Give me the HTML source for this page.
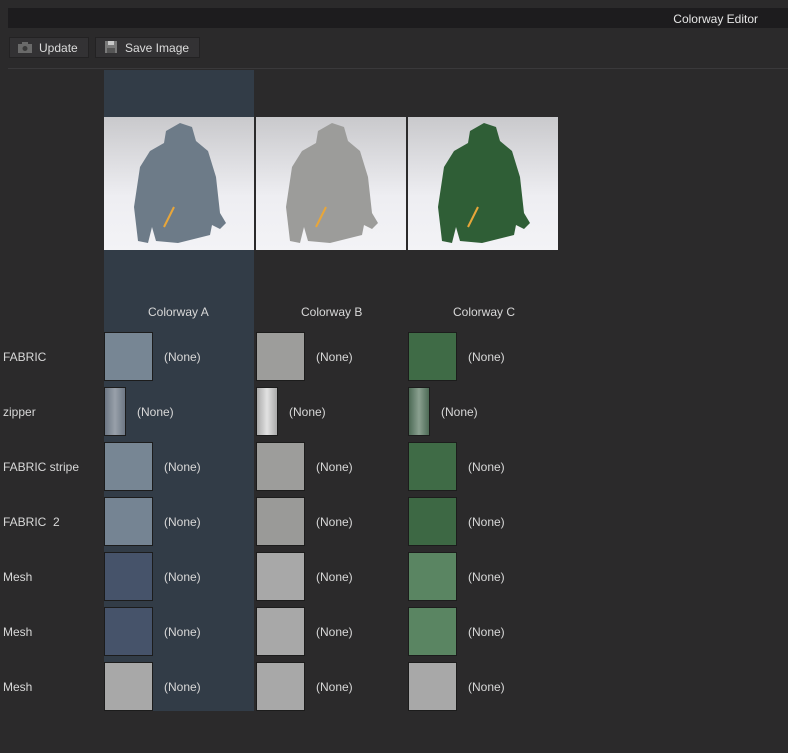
<!DOCTYPE html>
<html><head><meta charset="utf-8"><style>
body{margin:0;width:788px;height:753px;background:#2b2a2b;position:relative;overflow:hidden;font-family:"Liberation Sans","DejaVu Sans",sans-serif;font-size:12px;color:#d8d8d8}
.a{position:absolute}
.btn{position:absolute;top:37px;height:21px;background:#333234;border:1px solid #232223;color:#dcdcdc;font-size:12px;line-height:21px;box-sizing:border-box}
.sw{position:absolute;width:49px;height:49px;box-sizing:border-box;border:1px solid #1c1c1c}
.zp{width:22px}
.t{position:absolute;line-height:14px;margin-top:1px}
.img{position:absolute;top:117px;width:150px;height:133px;background:linear-gradient(#c9c9cc,#eeeef2 60%,#f3f3f6)}
</style></head><body>
<div class="a" style="left:8px;top:8px;width:780px;height:20px;background:#1d1c1e"></div>
<div class="t" style="right:30px;top:11px;color:#e6e6e6">Colorway Editor</div>
<div class="btn" style="left:9px;width:80px;padding-left:29px">Update</div>
<svg class="a" style="left:18px;top:42px" width="14" height="11"><rect x="0" y="2" width="14" height="9" fill="#6a6a6a"/><rect x="4" y="0" width="6" height="3" fill="#6a6a6a"/><circle cx="7" cy="6.5" r="2.5" fill="#3a3a3a"/></svg>
<div class="btn" style="left:95px;width:105px;padding-left:29px">Save Image</div>
<svg class="a" style="left:105px;top:41px" width="12" height="12"><rect width="12" height="12" fill="#7a7a7a"/><rect x="3" y="0" width="6" height="4" fill="#c8c8c8"/><rect x="2" y="7" width="8" height="5" fill="#555"/></svg>
<div class="a" style="left:8px;top:68px;width:780px;height:1px;background:#3a393b"></div>
<div class="a" style="left:104px;top:70px;width:150px;height:641px;background:#323c47"></div>

<div class="img" style="left:104px"><svg width="150" height="133" viewBox="0 0 150 133"><path d="M62 14 L76 6 L88 10 L92 24 L104 34 L112 60 L116 96 L122 106 L116 112 L108 108 L106 118 L74 126 L52 124 L48 110 L44 126 L34 124 L30 90 L36 50 L46 34 L60 26 Z" fill="#6d7b88"/><path d="M70 90 L60 110" stroke="#e8a63a" stroke-width="2"/></svg></div>
<div class="img" style="left:256px"><svg width="150" height="133" viewBox="0 0 150 133"><path d="M62 14 L76 6 L88 10 L92 24 L104 34 L112 60 L116 96 L122 106 L116 112 L108 108 L106 118 L74 126 L52 124 L48 110 L44 126 L34 124 L30 90 L36 50 L46 34 L60 26 Z" fill="#9c9c9a"/><path d="M70 90 L60 110" stroke="#e8a63a" stroke-width="2"/></svg></div>
<div class="img" style="left:408px"><svg width="150" height="133" viewBox="0 0 150 133"><path d="M62 14 L76 6 L88 10 L92 24 L104 34 L112 60 L116 96 L122 106 L116 112 L108 108 L106 118 L74 126 L52 124 L48 110 L44 126 L34 124 L30 90 L36 50 L46 34 L60 26 Z" fill="#2f5e36"/><path d="M70 90 L60 110" stroke="#e8a63a" stroke-width="2"/></svg></div>

<div class="t" style="left:148px;top:304px">Colorway A</div>
<div class="t" style="left:301px;top:304px">Colorway B</div>
<div class="t" style="left:453px;top:304px">Colorway C</div>

<div class="t" style="left:3px;top:349px">FABRIC</div>
<div class="t" style="left:3px;top:404px">zipper</div>
<div class="t" style="left:3px;top:459px">FABRIC stripe</div>
<div class="t" style="left:3px;top:514px">FABRIC&nbsp; 2</div>
<div class="t" style="left:3px;top:569px">Mesh</div>
<div class="t" style="left:3px;top:624px">Mesh</div>
<div class="t" style="left:3px;top:679px">Mesh</div>

<div class="sw" style="left:104px;top:332px;background:#778694"></div><div class="t" style="left:164px;top:349px">(None)</div>
<div class="sw" style="left:256px;top:332px;background:#9d9d9b"></div><div class="t" style="left:316px;top:349px">(None)</div>
<div class="sw" style="left:408px;top:332px;background:#3f6b46"></div><div class="t" style="left:468px;top:349px">(None)</div>
<div class="sw zp" style="left:104px;top:387px;background:linear-gradient(90deg,#6d7784,#98a0aa 50%,#6d7784)"></div><div class="t" style="left:137px;top:404px">(None)</div>
<div class="sw zp" style="left:256px;top:387px;background:linear-gradient(90deg,#aaa,#e2e2e2 50%,#aaa)"></div><div class="t" style="left:289px;top:404px">(None)</div>
<div class="sw zp" style="left:408px;top:387px;background:linear-gradient(90deg,#4d6a55,#8aa090 50%,#4d6a55)"></div><div class="t" style="left:441px;top:404px">(None)</div>
<div class="sw" style="left:104px;top:442px;background:#778694"></div><div class="t" style="left:164px;top:459px">(None)</div>
<div class="sw" style="left:256px;top:442px;background:#9d9d9b"></div><div class="t" style="left:316px;top:459px">(None)</div>
<div class="sw" style="left:408px;top:442px;background:#3f6b46"></div><div class="t" style="left:468px;top:459px">(None)</div>
<div class="sw" style="left:104px;top:497px;background:#758493"></div><div class="t" style="left:164px;top:514px">(None)</div>
<div class="sw" style="left:256px;top:497px;background:#9a9a98"></div><div class="t" style="left:316px;top:514px">(None)</div>
<div class="sw" style="left:408px;top:497px;background:#3d6844"></div><div class="t" style="left:468px;top:514px">(None)</div>
<div class="sw" style="left:104px;top:552px;background:#46536a"></div><div class="t" style="left:164px;top:569px">(None)</div>
<div class="sw" style="left:256px;top:552px;background:#a8a8a8"></div><div class="t" style="left:316px;top:569px">(None)</div>
<div class="sw" style="left:408px;top:552px;background:#5a8562"></div><div class="t" style="left:468px;top:569px">(None)</div>
<div class="sw" style="left:104px;top:607px;background:#46536a"></div><div class="t" style="left:164px;top:624px">(None)</div>
<div class="sw" style="left:256px;top:607px;background:#a8a8a8"></div><div class="t" style="left:316px;top:624px">(None)</div>
<div class="sw" style="left:408px;top:607px;background:#5a8562"></div><div class="t" style="left:468px;top:624px">(None)</div>
<div class="sw" style="left:104px;top:662px;background:#a8a8a8"></div><div class="t" style="left:164px;top:679px">(None)</div>
<div class="sw" style="left:256px;top:662px;background:#a8a8a8"></div><div class="t" style="left:316px;top:679px">(None)</div>
<div class="sw" style="left:408px;top:662px;background:#a8a8a8"></div><div class="t" style="left:468px;top:679px">(None)</div>
</body></html>
